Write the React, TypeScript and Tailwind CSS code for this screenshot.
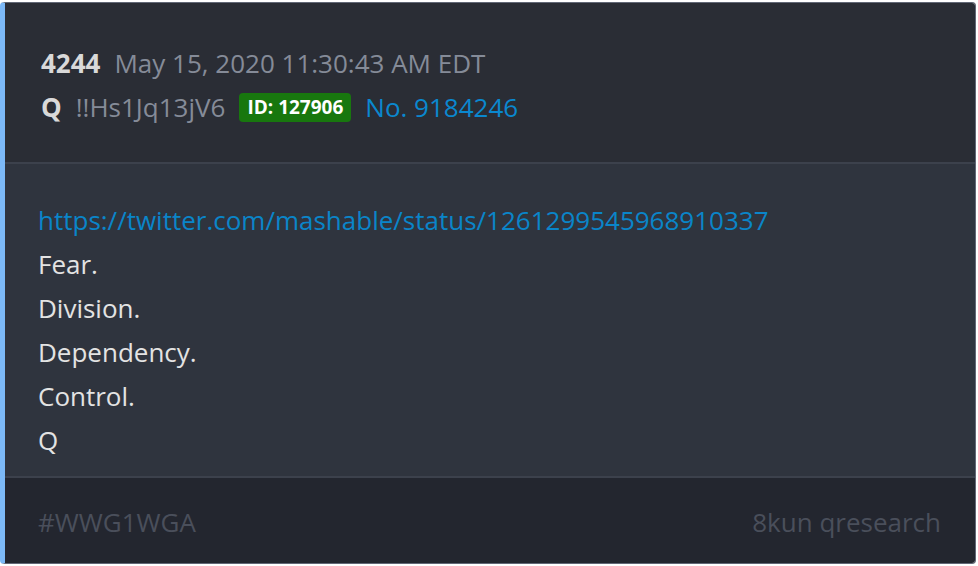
import React from "react";

const LINES = ["Fear.", "Division.", "Dependency.", "Control.", "Q"];

export default function App() {
  return (
    <div className="w-[978px] h-[566px] bg-white pt-[2px]" style={{ fontFamily: '"Open Sans", "Noto Sans", sans-serif' }}>
      <div className="w-[976px] h-[562px] flex flex-col overflow-hidden rounded-[4px] border border-[#626876] border-l-[5px] border-l-[#7cb9f7]">
        {/* Header */}
        <div className="h-[159px] bg-[#2a2d35] pl-[36px] pt-[38px] text-[26px] leading-[44px]">
          <div className="flex items-center">
            <span className="font-bold text-[#d9d9d9]">4244</span>
            <span className="ml-[14px] text-[#858b98]">May 15, 2020 11:30:43 AM EDT</span>
          </div>
          <div className="flex items-center">
            <span className="font-bold text-[#d9d9d9]">Q</span>
            <span className="ml-[14px] text-[#858b98]">!!Hs1Jq13jV6</span>
            <span className="ml-[14px] rounded-[4px] bg-[#18770e] px-[8px] text-[19px] leading-[29px] font-bold text-white">ID: 127906</span>
            <span className="ml-[14px] text-[#0a88cf]">No. 9184246</span>
          </div>
        </div>
        <div className="h-[2px] bg-[#3c414c]" />
        {/* Body */}
        <div className="h-[312px] bg-[#2f343e] pl-[33px] pt-[34px] text-[26px] leading-[44px] text-[#e3e3e3]">
          <div className="text-[#0a85c9]">https://twitter.com/mashable/status/1261299545968910337</div>
          {LINES.map((l) => (
            <div key={l}>{l}</div>
          ))}
        </div>
        <div className="h-[2px] bg-[#3c414c]" />
        {/* Footer */}
        <div className="flex-1 bg-[#23262f] pl-[33px] pr-[34px] pt-[3px] flex items-center justify-between text-[26px] text-[#4a4f5b]">
          <span>#WWG1WGA</span>
          <span>8kun qresearch</span>
        </div>
      </div>
    </div>
  );
}
